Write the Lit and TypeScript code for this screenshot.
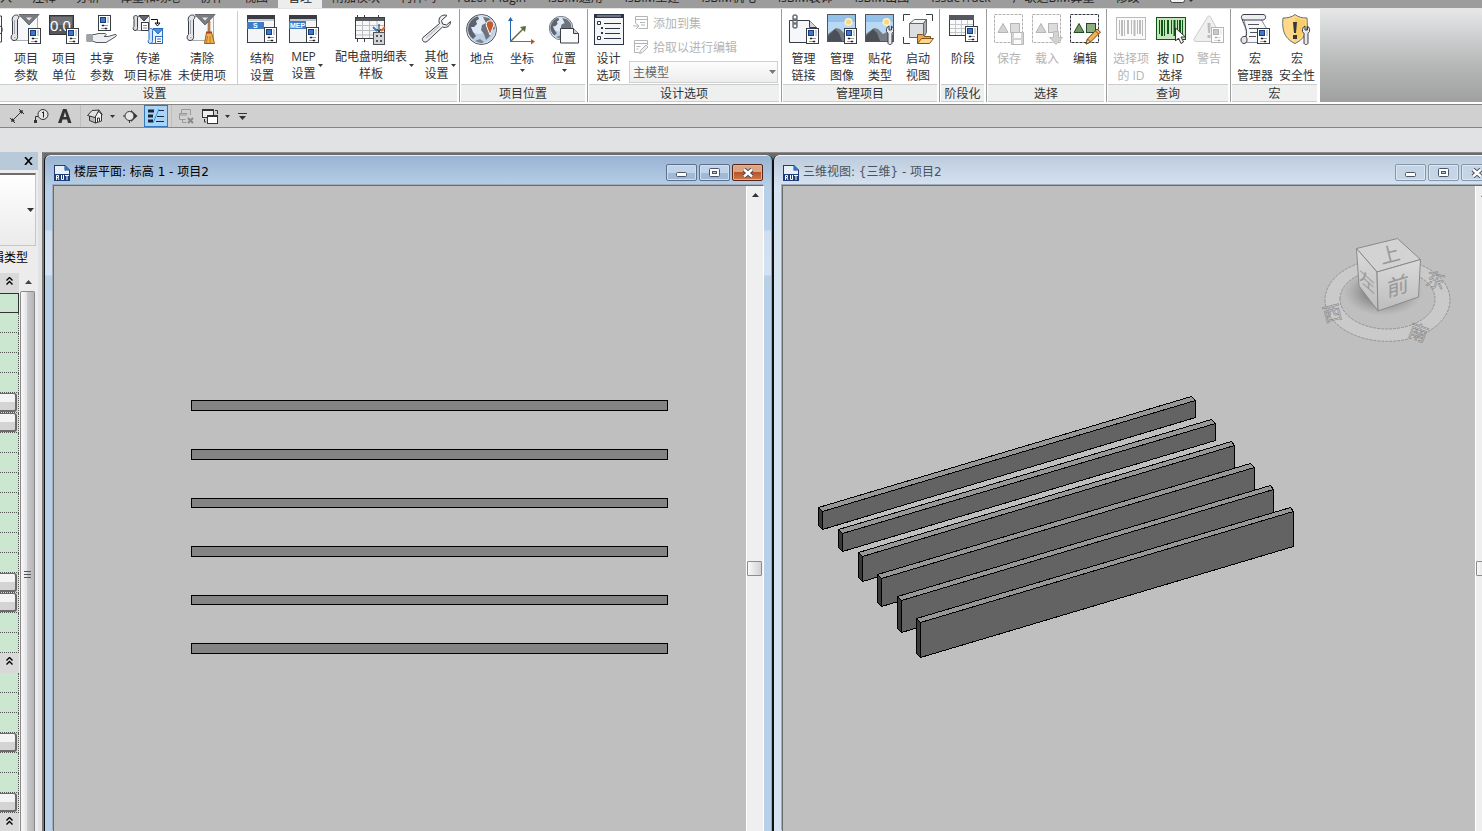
import { LitElement, html, svg, css, nothing, type SVGTemplateResult, type TemplateResult } from "lit";
import { customElement, property } from "lit/decorators.js";
import { classMap } from "lit/directives/class-map.js";

const INK = "#3a3d44";

/* ---------- shared icon parts ---------- */

const badge = (x: number, y: number) => svg`
  <g transform="translate(${x} ${y})">
    <rect x=".5" y=".5" width="12" height="15" fill="#fff" stroke="${INK}"/>
    <rect x="2.500" y="2.500" width="5" height="5" fill="#3f78c8" stroke="#173a80"/>
    <path d="M10 2v6" stroke="#9ca1a9"/>
    <path d="M4 10.500h6M3 13.500h6" stroke="#9a9ea6"/>
    <path d="M4 10h2v1H4zM7 13h2v1H7z" fill="#222" stroke="#222" stroke-width=".5"/>
  </g>`;

const scroll = svg`
  <path d="M6.500 2.500H27.500V26.500H6z" fill="#f6f7f8" stroke="#a9acb1"/>
  <path d="M6.500 1C3 1 1.500 4 2.500 8v12.500C.500 21.500.500 26.500 4 26.500c3 0 4-2 3.500-5V5.500C9.500 4 9 1 6.500 1z" fill="#e3e5e8" stroke="${INK}"/>
  <path d="M4.500 6v14M4 23.500h1.500" stroke="#a4a8ae" fill="none"/>`;

const funnel = svg`
  <path d="M9 .500H29L19 11z" fill="#7a7c80" stroke="#66686d"/>
  <path d="M16 3.500h6L19 6.500z" fill="#e9eaec"/>`;

const appWindow = svg`
  <rect x="1.500" y="1.500" width="27" height="27" fill="#f4f5f7" stroke="${INK}"/>
  <rect x="1" y="1" width="28" height="4" fill="${INK}"/>
  <rect x="2" y="5" width="26" height="2" fill="#c5c8ce"/>`;

const wrench = svg`
  <path d="M0 0c-2 1-3 3-2.500 5.500L-1 7.500V17c0 2 4 2 4 0V7.500L4.500 5.500C5 3 4 1 2.500 0v4H0z" fill="#e6e8eb" stroke="${INK}"/>`;

const globeLand = svg`
  <path d="M3 8L7 3l5-1 1 3-3 2 1 3-3 3-3 0 2 5 3 4-3 3C3 22 1 17 1 14z" fill="#5d6470"/>
  <path d="M17 3l6 1 5 5 1 6-3 1-2 6-4 4-2-6-3-4 1-5 4-2z" fill="#6d7480"/>
  <path d="M9 27l5-2 4 3-3 2z" fill="#7c838e"/>`;

const globe = svg`
  <circle cx="15.500" cy="15.500" r="15" fill="#bcd0e6" stroke="#50555f"/>
  <circle cx="13" cy="11" r="9" fill="#dfeaf6"/>
  ${globeLand}
  <circle cx="15.500" cy="15.500" r="14" fill="none" stroke="#eef3f9" stroke-opacity=".6"/>`;

const picture = svg`
  <rect x="1.500" y=".500" width="28" height="27" fill="#b9d8f3" stroke="#4d5562"/>
  <path d="M2 1h27v7H2z" fill="#93c1ea"/>
  <circle cx="22.500" cy="8" r="4" fill="#fff1c4"/><circle cx="22.500" cy="8" r="2.500" fill="#f8d682"/>
  <path d="M2 20l8-6 4 1 5 5 4-2 6 3v6H2z" fill="#777c85"/>
  <path d="M2 22l7-7 4 4 3 8H2z" fill="#4b5058"/>`;

const corners = (x: number, y: number) => svg`
  <rect x="${x}.5" y="${y}.5" width="28" height="28" fill="#fdfdfd" stroke="#333843" stroke-dasharray="3 1"/>
  <path d="M10 9.500L15 18.500H5z" fill="#6f9a64" stroke="#26472a"/>
  <rect x="17.500" y="9.500" width="9" height="9" fill="#8fae80" stroke="#26472a"/>`;

const barcode = (fill: string, bar: string) => svg`
  <rect x="1.500" y="3.500" width="29" height="22" fill="${fill}" stroke="${bar}"/>
  <path d="M4.500 6v14M9.500 6v16M16.500 6v14M22.500 6v14M27.500 6v16" stroke="${bar}"/>
  <path d="M7 6v16M13 6v14M19.500 6v16M25 6v14" stroke="${bar}" stroke-width="2"/>`;

const ICONS: Record<string, SVGTemplateResult> = {
  params: svg`${scroll}${funnel}${badge(18, 14)}`,
  units: svg`<rect x="1.500" y="1.500" width="24" height="19" fill="#55575c" stroke="#33353a"/>
    <rect x="3" y="3" width="21" height="8" fill="#707278"/>
    <text x="2" y="17" font-size="15" fill="#fff" font-family="Liberation Sans, sans-serif">0.0</text>${badge(18, 14)}`,
  share: svg`${badge(12, 1)}
    <path d="M1 20.500h8l3-1h6c3 0 3 2 0 3h4l7-2c2 0 2 1 0 2.500l-9 5.500H10l-2-1H1z" fill="#eceef0" stroke="#565a62"/>
    <path d="M1 20h6v8H1z" fill="#9da1a8"/>`,
  transfer: svg`<path d="M3.500 2.500h14v14h-12z" fill="#f0f1f3" stroke="#999"/>
    <path d="M3.500 1.500c-2 0-2 2-1.500 4v7c-1.500 1-1 4 1 4s2.500-1 2.500-3V4c1-1 0-2.500-2-2.500z" fill="#ddd" stroke="${INK}"/>
    <path d="M7 1.500h10L12 7z" fill="#66686d" stroke="${INK}"/>
    <rect x="9.500" y="8.500" width="7" height="8" fill="#fff" stroke="${INK}"/><path d="M11 11.500h4M11 14h4" stroke="#888"/>
    <path d="M19 5.500h6.500V10M23 9l2.500 3L28 9z" stroke="#111" fill="none"/>
    <g stroke="#2a6cc4"><path d="M18.500 15.500h12v14h-12z" fill="#e8f1fb"/>
    <path d="M18.500 14.500c-2 0-2 2-1.500 4v7c-1.500 1-1 4 1 4s2.500-1 2.500-3V17c1-1 0-2.500-2-2.500z" fill="#cfe2f7"/>
    <path d="M21 14.500h10L26 20z" fill="#4d8edb"/><rect x="23.500" y="22.500" width="7" height="7" fill="#fff"/><path d="M25 25h4M25 27.500h4"/></g>`,
  purge: svg`${scroll}${funnel}
    <path d="M22 8l2-1v12h-2z" fill="#c98a58" stroke="#7a4a28" stroke-width=".5"/>
    <path d="M20.500 18.500h5l3 11h-10z" fill="#f2b14d" stroke="#9a6218"/><path d="M20 18.500h6" stroke="#a2452a" stroke-width="2"/>
    <path d="M21.500 22l-1 7M24 22v7" stroke="#b97a24"/>`,
  struct: svg`${appWindow}<rect x="1" y="8" width="17" height="7" fill="#3f7cc4"/>
    <text x="7" y="14" font-size="7" font-weight="700" fill="#fff" font-family="Liberation Sans, sans-serif">S</text>${badge(18, 13)}`,
  mep: svg`${appWindow}<rect x="1" y="7" width="17" height="8" fill="#3f7cc4"/>
    <text x="2" y="14" font-size="7" font-weight="700" fill="#fff" font-family="Liberation Sans, sans-serif">MEP</text>${badge(18, 13)}`,
  schedule: svg`<path d="M2.500 1v27M9.500 1v27M23.500 1v27" stroke="${INK}"/>
    <rect x=".500" y="3.500" width="29" height="21" fill="#f7f7f8" stroke="${INK}"/><rect x="1" y="4" width="28" height="3" fill="#55585f"/>
    <path d="M1 11.500h28M1 16.500h28M1 21h28M7.500 7v17M14.500 7v17M22 7v17" stroke="#b9bcc1"/>
    <rect x="18.500" y="18.500" width="11" height="12" fill="#d2d4d8" stroke="#50535a"/>
    <path d="M21 21h2v2h-2zM25 21h2v2h-2zM21 26h2v2h-2zM25 26h2v2h-2z" fill="#50535a"/>
    <path d="M24 10v7M22 15l2 3 2-3" stroke="#222" fill="none"/><path d="M18 13l4 4" stroke="#2f7bd0" stroke-width="2"/><path d="M30 13l-4 4" stroke="#d8672c" stroke-width="2"/>`,
  tool: svg`<path d="M26 1.500c-4-1.500-8 1-8 5 0 1 0 2 .500 3L2 23.500c-2 2.500 1 6 4 4L21.500 13c4 1.500 8-1 8-5.500L25.500 11l-4-1-1-3.500z" fill="#eceef1" stroke="${INK}"/>
    <path d="M18.500 12L5 24" stroke="#c3c7cd" stroke-width="1.500"/>`,
  place: svg`${globe}<path d="M24 21l-3.500-9c-2-7 9-7 7 0z" fill="#c5592b" stroke="#fff"/>`,
  axes: svg`<path d="M4.500 6v21" stroke="#2464b4"/><path d="M2 7l2.500-4L7 7z" fill="#2464b4"/>
    <path d="M4 27.500h22" stroke="#b9552c"/><path d="M25 25l4 2.500-4 3z" fill="#b9552c"/>
    <path d="M5 27L17 15" stroke="#5e6b3e" stroke-width="1.500"/><path d="M14 13l6-1-1 6z" fill="#5e6b3e"/>`,
  position: svg`<g transform="translate(1 2) scale(.78)">${globe}</g>
    <path d="M12.500 14.500h13l5 5v9.500h-18z" fill="#fafbfc" stroke="${INK}"/><path d="M25.500 14.500v5h5" fill="#cfd3d9" stroke="${INK}"/>`,
  options: svg`<rect x="1.500" y=".500" width="29" height="30" fill="#f5f6f8" stroke="#2d3445" stroke-width="1"/><rect x="1" y="0" width="30" height="4" fill="#2d3445"/><path d="M4 2h24" stroke="#a9b2c4"/>
    <path d="M4.500 7.500h3v3h-3zM4.500 22.500h3v3h-3z" fill="#fff" stroke="#2d3445"/><path d="M8 13h2v2H8zM8 18h2v2H8z" fill="#2d3445"/>
    <path d="M11 9.500h17M12 14.500h15M12 19.500h15M11 24.500h17" stroke="#2d3445"/>`,
  link: svg`<path d="M1.500 6.500h20l7 7v15h-27z" fill="#f6f7f8" stroke="${INK}"/><path d="M21.500 6.500v7h7" fill="#d3d6db" stroke="${INK}"/>
    <g fill="none" stroke="#6a6e76" stroke-width="1.500"><rect x="5" y="1" width="4" height="5" rx="2"/><rect x="5" y="5" width="4" height="5" rx="2"/><rect x="5" y="9" width="4" height="5" rx="2"/></g>${badge(18, 14)}`,
  image: svg`${picture}${badge(18, 14)}`,
  decal: svg`${picture}<g transform="translate(25 12)">${wrench}</g>`,
  startview: svg`<path d="M1.500 7V.500H8M24 .500h6.500V7M1.500 23v6.500H8" fill="none" stroke="${INK}" stroke-width="1"/>
    <path d="M7.500 9.500l5-4h12l-3 4z" fill="#f2f3f4" stroke="#666"/><path d="M7.500 9.500h14v14h-14z" fill="#dcdee1" stroke="#666"/><path d="M21.500 9.500l3-4v13l-3 5z" fill="#a9adb3" stroke="#666"/>
    <path d="M15.500 29.500v-9h5l2 2h6v3" fill="#e9a94d" stroke="#80531a"/><path d="M15.500 29.500l4-5h12l-4 5z" fill="#ffd58a" stroke="#80531a"/>`,
  phase: svg`<rect x="2.500" y="1.500" width="24" height="20" fill="#fafafa" stroke="${INK}"/><rect x="2" y="1" width="25" height="5" fill="#55585f"/>
    <path d="M3 10.500h23M3 14.500h23M3 18.500h23M8.500 6v15M14.500 6v15M20.500 6v15" stroke="#c3c6ca"/>${badge(18, 12)}`,
  selsave: svg`${corners(1, 0)}<path d="M18.500 18.500h12v12h-12z" fill="#8a8d92" stroke="#444"/><path d="M21 19h7v5h-7zM21 26h7v4h-7z" fill="#f5f5f5"/>`,
  selload: svg`${corners(1, 0)}<path d="M22.500 17.500h5v6h4l-6.500 7-6.500-7h4z" fill="#8a8d92" stroke="#555"/>`,
  seledit: svg`${corners(1, 0)}<path d="M17 30l1.500-5L28 15l3.500 3L21.500 28z" fill="#f0b455" stroke="#6d4318"/><path d="M17 30l1.500-5 3 3z" fill="#fbe7c6" stroke="#6d4318"/><path d="M26.500 17l3 3" stroke="#a33"/>`,
  idof: svg`${barcode("#f3f3f3", "#4b4e54")}`,
  byid: svg`${barcode("#c5e6bd", "#0e5713")}<path d="M20.500 14v13l3-3 2.500 5.500 2.500-1.500L26 23h4.500z" fill="#fff" stroke="#333"/>`,
  warn: svg`<path d="M14.500 3c1-1.500 2-1.500 3 0l12 22c0 2-1 2.500-2 2.500H3c-1.500 0-2.500-1-2-2.500z" fill="#d5d6d8" stroke="#777"/>
    <path d="M14.500 9h3l-.500 10h-2zM14.500 21h3v3h-3z" fill="#555"/>${badge(18, 13)}`,
  macro: svg`<path d="M7 3.500H21L27.500 14.500V28.500H6C9 20 6 12 5 5z" fill="#f6f7f8" stroke="#8b8f96"/>
    <path d="M5 .500h19c4 0 3 5.500 0 5.500H5C1.500 6 1.500 .500 5 .500z" fill="#eceef0" stroke="${INK}"/>
    <path d="M3 5c2 6 6 11 4 17M5 22.500c-4 0-4 7 0 7 3 0 4-4 2-7z" fill="#e3e5e8" stroke="${INK}"/>
    <path d="M9 10.500h11M10 14.500h12M11 18.500h9M10 22.500h7" stroke="#50545c"/>${badge(18, 14)}`,
  security: svg`<path d="M14 .500c3 2.500 7 3.500 12 3.500 1 10 0 20-12 25.500C2 24 1 14 2 4c5 0 9-1 12-3.500z" fill="#ffd98a" stroke="#6a6d74"/>
    <path d="M14 3c3 2 6 3 10 3 .500 8-1 16-10 21z" fill="#f9cd66"/>
    <path d="M12 8h4l-1 11h-2zM12 21h4v4h-4z" fill="#33363c"/><g transform="translate(24 12)">${wrench}</g>`,
};

interface Tool { icon: string; lines: string[]; off?: boolean; menu?: "side" | "below" }

const caret = html`<svg class="caret" viewBox="0 0 5 3" width="5" height="3"><path d="M0 0h5L2.500 3z" fill="#3a3a3a"/></svg>`;

@customElement("ribbon-button")
class RibbonButton extends LitElement {
  @property({ attribute: false }) tool!: Tool;
  static styles = css`
    :host { display: block; }
    button { display: flex; flex-direction: column; align-items: center; width: 100%; padding: 5px 0 0; border: 0; background: none; color: #333;
      font: 12px/17px "Open Sans", "Noto Sans CJK SC", sans-serif; }
    .label { display: flex; align-items: center; gap: 2px; margin-top: 4px; white-space: nowrap; }
    .label.side { margin-top: 2px; }
    .label.side::before { content: ""; width: 5px; }
    .caret { flex: none; }
    .below { margin-top: 2px; }
    .below .caret { display: block; }
    .off { color: #b4b4b4; }
    .off .icon { opacity: .38; filter: grayscale(1); }
  `;
  render() {
    const t = this.tool;
    return html`<button ?disabled=${t.off} class=${classMap({ off: !!t.off })}>
      <svg class="icon" width="32" height="32" viewBox="0 0 32 32">${ICONS[t.icon]}</svg>
      <span class=${classMap({ label: true, side: t.menu === "side" })}>
        <span>${t.lines.map((l, i) => html`${i ? html`<br>` : nothing}${l}`)}</span>
        ${t.menu === "side" ? caret : nothing}
      </span>
      ${t.menu === "below" ? html`<span class="below">${caret}</span>` : nothing}
    </button>`;
  }
}

@customElement("ribbon-bar")
class RibbonBar extends LitElement {
  static styles = css`
    :host { display: flex; height: 93px; overflow: hidden; background: linear-gradient(#e6e7e8, #b6b7b7 60%, #9fa0a0); border-bottom: 2px solid #fff;
      font: 12px/17px "Open Sans", "Noto Sans CJK SC", sans-serif; color: #333; }
    section { display: flex; flex-direction: column; flex: none; box-sizing: border-box; background: #fff; border-right: 1px solid #9c9c9c; }
    section:last-child { border-right-color: #fff; }
    .tools { display: grid; flex: 1; align-content: start; }
    h2 { margin: 0 2px 0 1px; font: inherit; line-height: 18px; height: 16px; text-align: center; background: #eeefef; border-top: 1px solid #ccc; border-bottom: 1px solid #ccc; white-space: nowrap; }
    .settings { width: 460px; } .settings .tools { grid-template-columns: 7px 38px 38px 38px 54px 54px 16px 34px 49px 86px 45px; }
    .settings h2 { padding-right: 148px; margin-left: 0; }
    .cut { display: block; margin-top: 5px; }
    .split { width: 1px; height: 73px; margin: 2px auto 0; background: #cdcdcd; }
    .place { width: 128px; } .place .tools { grid-template-columns: 40px 40px 44px; padding-left: 2px; }
    .design { width: 194px; } .design .tools { grid-template-columns: 39px 1fr; padding: 0 3px 0 1px; }
    .manage { width: 158px; } .manage .tools { grid-template-columns: 39px 38px 38px 38px; padding-left: 2px; }
    .phase { width: 47px; } .phase .tools { grid-template-columns: 1fr; }
    .select { width: 120px; } .select .tools { grid-template-columns: repeat(3, 38px); padding-left: 3px; }
    .query { width: 124px; } .query .tools { grid-template-columns: 40px 39px 38px; padding-left: 4px; }
    .macro { width: 89px; } .macro .tools { grid-template-columns: 42px 42px; padding-left: 3px; }
    .stack { display: flex; flex-direction: column; gap: 0; padding-top: 2px; }
    .mini { display: flex; align-items: center; gap: 4px; height: 24px; padding: 0 0 0 5px; border: 0; background: none; font: inherit; color: #b4b4b4; white-space: nowrap; }
    .combo { display: grid; align-items: center; margin: 2px 0 0 1px; }
    .combo > * { grid-area: 1 / 1; }
    .combo svg { justify-self: end; margin-right: 2px; pointer-events: none; }
    select { appearance: none; width: 100%; height: 22px; padding: 0 14px 0 3px; border: 1px solid #d0d0d0; border-radius: 0; background: linear-gradient(#fdfdfd, #ededed); font: inherit; color: #666; }
  `;
  private panel(cls: string, title: string, tools: (Tool | TemplateResult)[]) {
    return html`<section class=${cls}>
      <div class="tools">${tools.map(t => "icon" in t ? html`<ribbon-button .tool=${t}></ribbon-button>` : t)}</div>
      <h2>${title}</h2>
    </section>`;
  }
  render() {
    return html`
      ${this.panel("settings", "设置", [
        html`<svg class="cut" width="3" height="32" viewBox="0 0 3 32"><path d="M0 2h1.500v26H0" fill="none" stroke="#444"/><path d="M0 12c3 1 3 6 0 8" fill="none" stroke="#444"/></svg>`,
        { icon: "params", lines: ["项目", "参数"] },
        { icon: "units", lines: ["项目", "单位"] },
        { icon: "share", lines: ["共享", "参数"] },
        { icon: "transfer", lines: ["传递", "项目标准"] },
        { icon: "purge", lines: ["清除", "未使用项"] },
        html`<div class="split"></div>`,
        { icon: "struct", lines: ["结构", "设置"] },
        { icon: "mep", lines: ["MEP", "设置"], menu: "side" },
        { icon: "schedule", lines: ["配电盘明细表", "样板"], menu: "side" },
        { icon: "tool", lines: ["其他", "设置"], menu: "side" },
      ])}
      ${this.panel("place", "项目位置", [
        { icon: "place", lines: ["地点"] },
        { icon: "axes", lines: ["坐标"], menu: "below" },
        { icon: "position", lines: ["位置"], menu: "below" },
      ])}
      ${this.panel("design", "设计选项", [
        { icon: "options", lines: ["设计", "选项"] },
        html`<div class="stack">
          <button class="mini" disabled><svg width="16" height="16" viewBox="0 0 16 16"><path d="M2.500 1.500h12v12h-9M2.500 1.500v7M2 4.500h12" fill="none" stroke="#b4b4b4"/><path d="M7 7.500h5M8 10h4M0 11h5M3 8.500L6 11l-3 3" fill="none" stroke="#b4b4b4"/></svg>添加到集</button>
          <button class="mini" disabled><svg width="16" height="16" viewBox="0 0 16 16"><path d="M6 13.500H1.500v-12h13V6M1 4.500h13M3.500 7.500h4M3.500 10h2" fill="none" stroke="#b4b4b4"/><path d="M6.500 14.500l1-3L13 6l2 2-5.500 5.500z" fill="#eee" stroke="#b4b4b4"/></svg>拾取以进行编辑</button>
          <label class="combo"><select aria-label="设计选项"><option>主模型</option></select><svg width="7" height="4" viewBox="0 0 7 4"><path d="M0 0h7L3.500 4z" fill="#777"/></svg></label>
        </div>`,
      ])}
      ${this.panel("manage", "管理项目", [
        { icon: "link", lines: ["管理", "链接"] },
        { icon: "image", lines: ["管理", "图像"] },
        { icon: "decal", lines: ["贴花", "类型"] },
        { icon: "startview", lines: ["启动", "视图"] },
      ])}
      ${this.panel("phase", "阶段化", [{ icon: "phase", lines: ["阶段"] }])}
      ${this.panel("select", "选择", [
        { icon: "selsave", lines: ["保存"], off: true },
        { icon: "selload", lines: ["载入"], off: true },
        { icon: "seledit", lines: ["编辑"] },
      ])}
      ${this.panel("query", "查询", [
        { icon: "idof", lines: ["选择项", "的 ID"], off: true },
        { icon: "byid", lines: ["按 ID", "选择"] },
        { icon: "warn", lines: ["警告"], off: true },
      ])}
      ${this.panel("macro", "宏", [
        { icon: "macro", lines: ["宏", "管理器"] },
        { icon: "security", lines: ["宏", "安全性"] },
      ])}`;
  }
}

@customElement("quick-bar")
class QuickBar extends LitElement {
  static styles = css`
    :host { display: flex; align-items: center; height: 22px; padding-left: 5px; background: #d0d0d0; border-top: 1px solid #868686; border-bottom: 1px solid #868686; }
    button { display: grid; place-items: center; width: 24px; height: 22px; padding: 0; border: 0; background: none; }
    .drop { width: 11px; }
    .more { width: 18px; }
    .on { margin-left: 2px; background: #a9d3f7; border: 1px solid #2f78c0; }
    .sep { width: 1px; height: 22px; margin: 0 2px 0 3px; background: #bdbdbd; }
  `;
  private b(name: string, art: SVGTemplateResult, cls = "", w = 16) {
    return html`<button class=${cls} aria-label=${name}><svg width=${w} height="16" viewBox="0 0 ${w} 16">${art}</svg></button>`;
  }
  private drop() {
    return html`<button class="drop" aria-label="更多"><svg width="5" height="3" viewBox="0 0 5 3"><path d="M0 0h5L2.500 3z" fill="#333"/></svg></button>`;
  }
  render() {
    return html`
      ${this.b("对齐尺寸标注", svg`<path d="M3 13L13 3M1 10l5 5M10 1l5 5" stroke="#333" fill="none"/><path d="M2 14l1-4 3 3zM14 2l-1 4-3-3z" fill="#333"/>`)}
      ${this.b("按类别标记", svg`<circle cx="10" cy="6.500" r="5" fill="#e4e4e4" stroke="#333"/><path d="M10.500 3.500v6M9 5l1-1" stroke="#222" fill="none"/><path d="M5 8.500H2.500V12" stroke="#333" fill="none"/><rect x="1" y="12" width="3" height="3" fill="#333"/>`)}
      ${this.b("文字", svg`<path d="M1 15L6 1h3.500l5 14h-3.500l-1-3.500H5.500L4.500 15zM6.500 9H9.500L8 4z" fill="#333"/>`)}
      <span class="sep"></span>
      ${this.b("默认三维视图", svg`<path d="M8.500 6l3.500-2.500 2.500 3v6.500l-6 2z" fill="#f4f4f4" stroke="#333"/><path d="M2.500 7.500v5l6 2.500V8.500z" fill="#b9bcc0" stroke="#333"/><path d="M.500 7.500L5 2.500l7-.500-4 7.500z" fill="#dfe1e3" stroke="#333"/><path d="M12 2l3.500 5" stroke="#333"/><path d="M10.500 14v-4h2v3.500" stroke="#333" fill="none"/>`)}
      ${this.drop()}
      ${this.b("剖面", svg`<path d="M9 2l6.500 6L9 14z" fill="#333"/><circle cx="7.500" cy="8" r="4.500" fill="#e6e6e6" stroke="#333"/><path d="M1 8h2M7.500 12v3" stroke="#333"/>`)}
      ${this.b("细线", svg`<path d="M1 3h6M1 8h5M1 13h5" stroke="#1b2638" stroke-width="3"/><path d="M11 2.500h6M10 8.500h7M9 13.500h8" stroke="#1b2638"/><path d="M12 1L6 15" stroke="#1f9ee0"/>`, "on", 18)}
      <span class="sep"></span>
      ${this.b("关闭隐藏窗口", svg`<path d="M3.500 5V1.500h9V7M1.500 11V5.500h8M1 7h8M1.500 11.500h6M4.500 12v2.500h4" fill="none" stroke="#999"/><path d="M10 10l5 5M15 10l-5 5" stroke="#8a8a8a" stroke-width="2"/>`)}
      ${this.b("切换窗口", svg`<rect x=".500" y="1.500" width="11" height="8" fill="#eee" stroke="#333"/><path d="M0 2h12" stroke="#333" stroke-width="2"/><rect x="5.500" y="7.500" width="10" height="8" fill="#fff" stroke="#333"/><path d="M5 8h11" stroke="#333" stroke-width="2"/><path d="M13 2.500h2.500V6M2.500 11v3H4" stroke="#333" fill="none"/>`)}
      ${this.drop()}
      <button class="more" aria-label="自定义快速访问工具栏"><svg width="9" height="7" viewBox="0 0 9 7"><path d="M0 .500h9" stroke="#333"/><path d="M1 3h7L4.500 7z" fill="#333"/></svg></button>`;
  }
}

type Row = "head" | "focus" | "plain" | "button";
const plain = (n: number): Row[] => Array(n).fill("plain");
const ROWS: Row[] = [
  "head", "focus", ...plain(4), "button", "button", ...plain(7), "button", "button", ...plain(2),
  "head", ...plain(3), "button", ...plain(2), "button", "head",
];

@customElement("property-palette")
class PropertyPalette extends LitElement {
  static styles = css`
    :host { display: flex; flex-direction: column; width: 38px; flex: none; overflow: hidden; background: #ececed; font: 12px/17px "Open Sans", "Noto Sans CJK SC", sans-serif; color: #000; }
    header { display: flex; justify-content: flex-end; align-items: center; height: 18px; padding-right: 5px; background: #b8c9d9; }
    header button { display: grid; padding: 0; border: 0; background: none; width: 10px; height: 10px; place-items: center; }
    .type { display: flex; align-items: center; justify-content: flex-end; box-sizing: border-box; height: 73px; margin: 3px 2px 0 0; padding: 0 1px 0 0; border: solid #c6c6c6; border-width: 2px 1px 1px 0; border-top-color: #6c6c6c; background: linear-gradient(#fff, #ebebeb); }
    .edit { display: flex; justify-content: flex-end; height: 24px; padding: 3px 10px 0 0; box-sizing: border-box; margin-bottom: 3px; border: 0; background: none; font: inherit; white-space: nowrap; }
    .body { display: flex; flex: 1; min-height: 0; overflow: hidden; }
    .rows { flex: 0 0 19px; height: 0; }
    .row { box-sizing: border-box; height: 20px; background: #cbe7cf; border-bottom: 1px dotted #555; border-right: 1px dotted #555; }
    .head { display: grid; place-items: center; padding-bottom: 3px; background: #d9d9d9; border-color: transparent; }
    .focus { border-bottom-style: solid; border-color: #333; box-shadow: inset 0 1px #333; border-right-style: solid; }
    .row button { display: block; width: 17px; height: 19px; padding: 0; border: solid #6b6b6b; border-width: 1px 2px 2px 0; border-radius: 0 3px 3px 0; background: linear-gradient(#f4f4f4 50%, #d4d4d4 50%); }
    .track { display: flex; flex-direction: column; align-items: center; width: 16px; margin-left: 1px; background: #ececec; }
    .track .up { padding: 7px 0; line-height: 0; }
    .thumb { flex: 1; display: flex; align-items: flex-start; justify-content: center; box-sizing: border-box; width: 15px; margin-right: 1px; border: 1px solid #8a8a8a; border-bottom: 0; border-radius: 2px 2px 0 0; background: linear-gradient(90deg, #f5f5f5 10%, #e4e4e6 45%, #c9c9cc 50%, #b6b6ba); }
    .grip { margin-top: calc(50vh - 137px); }
  `;
  render() {
    return html`
      <header><button aria-label="关闭"><svg width="9" height="8" viewBox="0 0 9 8"><path d="M1 0l7 8M8 0L1 8" stroke="#000" stroke-width="1.600"/></svg></button></header>
      <div class="type"><svg width="7" height="4" viewBox="0 0 7 4"><path d="M0 0h7L3.500 4z" fill="#333"/></svg></div>
      <button class="edit">编辑类型</button>
      <div class="body">
        <div class="rows">${ROWS.map(r => html`<div class="row ${r === "plain" || r === "button" ? "" : r}">
          ${r === "head" ? html`<svg width="7" height="8" viewBox="0 0 7 8"><path d="M.500 3.500l3-3 3 3M.500 7.500l3-3 3 3" fill="none" stroke="#000" stroke-width="1.400"/></svg>` : nothing}
          ${r === "button" ? html`<button aria-label="值"></button>` : nothing}</div>`)}</div>
        <div class="track">
          <span class="up"><svg width="7" height="4" viewBox="0 0 7 4"><path d="M0 4h7L3.500 0z" fill="#444"/></svg></span>
          <div class="thumb"><svg class="grip" width="7" height="8" viewBox="0 0 7 8"><path d="M0 .500h7M0 3.500h7M0 6.500h7" stroke="#555"/></svg></div>
        </div>
      </div>`;
  }
}

@customElement("mdi-window")
class MdiWindow extends LitElement {
  @property() heading = "";
  @property({ type: Boolean, reflect: true }) active = false;
  static styles = css`
    :host { display: flex; flex-direction: column; box-sizing: border-box; flex: none; width: calc(50% + 10px); padding: 0 8px 0 7px; border: solid #111; border-width: 0 1px; border-radius: 6px 6px 0 0;
      font: 12px/17px "DejaVu Sans", "Noto Sans CJK SC", sans-serif; color: #4a5360; box-shadow: inset 0 1px #f4f8fc; background: linear-gradient(#bccbdc, #d6e3f1 32px); }
    :host([active]) { background: linear-gradient(#98b2d2, #b7d0e8 32px, #b7d0e8 75px, #cfdff2 76px, #d3e2f3 120px, #b7d0e8 121px); box-shadow: inset -1px 0 #35d0f0, inset 0 1px #e6f0fa; color: #000; }
    .title { display: flex; align-items: center; gap: 2px; height: 25px; padding: 5px 1px 0 2px; }
    h1 { flex: 1; margin: 0 0 0 2px; font: inherit; white-space: nowrap; }
    .title button { display: grid; place-items: center; box-sizing: border-box; width: 31px; height: 17px; padding: 0; border: 1px solid #8496aa; border-radius: 2px; background: #c6d5e5; box-shadow: inset 0 0 0 1px #dce7f2; }
    :host([active]) .title button { border-color: #5d718c; background: linear-gradient(#c1d3e8 50%, #9fb9d6 50%); box-shadow: inset 0 0 0 1px #cfdff0; }
    :host([active]) .title .close { border-color: #5a2418; background: linear-gradient(#dba583 48%, #b9532a 50%, #cd7a48); box-shadow: inset 0 0 0 1px #e2b194; }
    .client { display: flex; flex: 1; min-height: 0; border-top: 1px solid #6c6c6c; border-left: 1px solid #6c6c6c; border-right: 1px solid #fff; background: #bfbfbf; box-shadow: -1px -1px #a3adb8; margin-left: 1px; }
    .view { flex: 1; min-width: 0; display: flex; }
    .bar { flex: none; width: 16px; border-left: 1px solid #fff; background: #efefef; display: flex; flex-direction: column; align-items: center; }
    .bar .up { flex: none; margin-top: 7px; }
    .knob { flex: none; box-sizing: border-box; width: 15px; height: 15px; margin-top: calc(50vh - 52px); margin-right: 1px; border: 1px solid #8c8c8c; border-radius: 1px; background: linear-gradient(90deg, #f8f8f8, #d2d2d4); }
  `;
  render() {
    return html`
      <div class="title">
        <svg width="16" height="16" viewBox="0 0 16 16"><path d="M0 0h11l5 5v11H0z" fill="#1d3c78"/><path d="M1 1h9.500v4.500H15V9H1z" fill="#e8f1fa"/><path d="M11 0l5 5h-5z" fill="#2e74c0"/>
          <path d="M2.500 15v-4.500h2v2h-2M4 13l1 2M7.500 10v4.500h2V10M11 10.500h4M13 10v5" fill="none" stroke="#fff"/></svg>
        <h1>${this.heading}</h1>
        <button aria-label="最小化"><svg width="11" height="9" viewBox="0 0 11 9"><rect x=".500" y="4.500" width="10" height="4" rx="1" fill="#fff" stroke="#4b5568"/></svg></button>
        <button aria-label="最大化"><svg width="11" height="9" viewBox="0 0 11 9"><rect x=".500" y=".500" width="10" height="8" rx="1" fill="#fff" stroke="#4b5568"/><rect x="3.500" y="3.500" width="4" height="2" fill="#b9cbe0" stroke="#4b5568"/></svg></button>
        <button class="close" aria-label="关闭"><svg width="12" height="10" viewBox="0 0 12 10"><path d="M2 1.500l8 7M10 1.500l-8 7" stroke="#4b4b58" stroke-width="4.500"/><path d="M2 1.500l8 7M10 1.500l-8 7" stroke="#fff" stroke-width="2.400"/></svg></button>
      </div>
      <div class="client">
        <div class="view"><slot></slot></div>
        <div class="bar"><svg class="up" width="7" height="4" viewBox="0 0 7 4"><path d="M0 4h7L3.500 0z" fill="#333"/></svg><span class="knob"></span></div>
      </div>`;
  }
}

const PLAN_Y = [[214, 10], [263, 10], [312, 9], [360, 10], [409, 9], [457, 10]];

/* l and r: far top corners at both ends; hl and hr: face heights; dx: depth offset of the right end */
const BEAMS = [
  { l: [35, 321], r: [408, 210], hl: 18, hr: 17, dx: 4 },
  { l: [55, 343], r: [428, 233], hl: 18, hr: 17, dx: 4 },
  { l: [75, 366], r: [448, 255], hl: 25, hr: 27, dx: 3 },
  { l: [94, 388], r: [467, 277], hl: 28, hr: 28, dx: 4 },
  { l: [114, 410], r: [487, 299], hl: 32, hr: 33, dx: 3 },
  { l: [133, 432], r: [507, 321], hl: 35, hr: 35, dx: 3 },
];

const TABS = ["插入", "注释", "分析", "体量和场地", "协作", "视图", "管理", "附加模块", "构件坞", "Fuzor Plugin", "isBIM通用", "isBIM土建", "isBIM机电", "isBIM装饰", "isBIM出图", "IssueTrack", "广联达BIM算量", "修改"];

@customElement("app-root")
class AppRoot extends LitElement {
  static styles = css`
    :host { display: flex; flex-direction: column; height: 100vh; overflow: hidden; background: #e0e2e4; font: 12px/17px "Open Sans", "Noto Sans CJK SC", sans-serif; }
    nav { display: flex; align-items: flex-end; flex: none; height: 8px; overflow: hidden; background: #9b9c9b; border-bottom: 1px solid #e4e4e4; }
    nav a { flex: none; padding: 0 10px 2px; color: #222; text-decoration: none; white-space: nowrap; }
    nav a:first-child { margin-left: -22px; }
    nav .here { background: #eceded; }
    nav .plugin { padding: 0 11px 2px; }
    nav svg { margin-left: 20px; flex: none; }
    ribbon-bar, quick-bar { flex: none; }
    main { display: flex; flex: 1; min-height: 0; margin-top: 24px; }
    .mdi { display: flex; flex: 1; min-width: 0; overflow: hidden; border-top: 1px solid #8a8a8a; border-left: 2px solid #777; margin-left: 4px; background: #6b6b6b; }
    mdi-window { margin-top: 2px; }
    .drawing { width: 100%; height: 100%; flex: 1; display: block; }
    .drawing text { font-family: "Noto Sans CJK SC", sans-serif; }
  `;
  private beam(b: (typeof BEAMS)[number]) {
    const [lx, ly] = b.l, [rx, ry] = b.r;
    const fx = lx + 4, fy = ly + 4, gx = rx + b.dx, gy = ry + 4;
    return svg`<g stroke="#000" stroke-linejoin="bevel">
      <path d="M${fx} ${fy}L${gx} ${gy}V${gy + b.hr}L${fx} ${fy + b.hl}z" fill="#636363"/>
      <path d="M${lx} ${ly}L${rx} ${ry}L${gx} ${gy}L${fx} ${fy}z" fill="#979797"/>
      <path d="M${lx} ${ly}L${fx} ${fy}V${fy + b.hl}L${lx} ${ly + b.hl}z" fill="#393939"/></g>`;
  }
  render() {
    return html`
      <nav>${TABS.map(t => html`<a href="#" class=${classMap({ here: t === "管理", plugin: /[a-z]/.test(t) || t === "广联达BIM算量" })}>${t}</a>`)}
        <svg width="24" height="8" viewBox="0 0 24 8"><rect x="1.500" y="-6" width="14" height="8.500" rx="2" fill="#f2f2f2" stroke="#444"/><path d="M20 0h4l-2 2z" fill="#333"/></svg></nav>
      <ribbon-bar></ribbon-bar>
      <quick-bar></quick-bar>
      <main>
        <property-palette></property-palette>
        <div class="mdi">
          <mdi-window active heading="楼层平面: 标高 1 - 项目2">
            <svg class="drawing"><g fill="#848484" stroke="#000">
              ${PLAN_Y.map(([y, h]) => svg`<rect x="137.500" y="${y}.5" width="476" height="${h}"/>`)}</g></svg>
          </mdi-window>
          <mdi-window heading="三维视图: {三维} - 项目2">
            <svg class="drawing">
              <defs>
                <radialGradient id="shade"><stop offset=".3" stop-color="#555" stop-opacity=".7"/><stop offset="1" stop-color="#888" stop-opacity="0"/></radialGradient>
                <linearGradient id="face" x2="0" y2="1"><stop offset="0" stop-color="#dadada"/><stop offset="1" stop-color="#bdbdbd"/></linearGradient>
              </defs>
              <g transform="translate(.5 .5)" shape-rendering="crispEdges">${BEAMS.map(b => this.beam(b))}</g>
              <path d="M542 114a62 41 0 1 0 125 0a62 41 0 1 0-125 0zM557 113a47.500 30 0 1 1 95 0a47.500 30 0 1 1-95 0z" fill="#cacaca" stroke="#949494" stroke-dasharray="3 1" fill-rule="evenodd"/>
              <ellipse cx="600" cy="106" rx="40" ry="24" fill="url(#shade)"/>
              <g stroke="#8a8a8a" stroke-linejoin="round">
                <path d="M573.500 62.500L614.500 52.500L637.500 73.500L594 86z" fill="#d3d3d3"/>
                <path d="M573.500 62.500L594 86L595 125L576 100z" fill="url(#face)"/>
                <path d="M594 86L637.500 73.500L635.500 111L595 125z" fill="url(#face)"/>
              </g>
              <g fill="#999" text-anchor="middle">
                <text x="607" y="76" font-size="20" transform="rotate(-14 606 70)">上</text>
                <text transform="translate(615 108) skewY(-17)" font-size="22">前</text>
                <text transform="translate(584 101) skewY(42)" font-size="16">左</text>
                <g font-size="19" fill="none" stroke="#8a8a8a" stroke-width=".6">
                  <text transform="translate(551 134) rotate(-14)">西</text>
                  <text transform="translate(633 153) rotate(20)">南</text>
                  <text transform="translate(651 101) rotate(14)">东</text>
                </g>
              </g>
            </svg>
          </mdi-window>
        </div>
      </main>`;
  }
}
